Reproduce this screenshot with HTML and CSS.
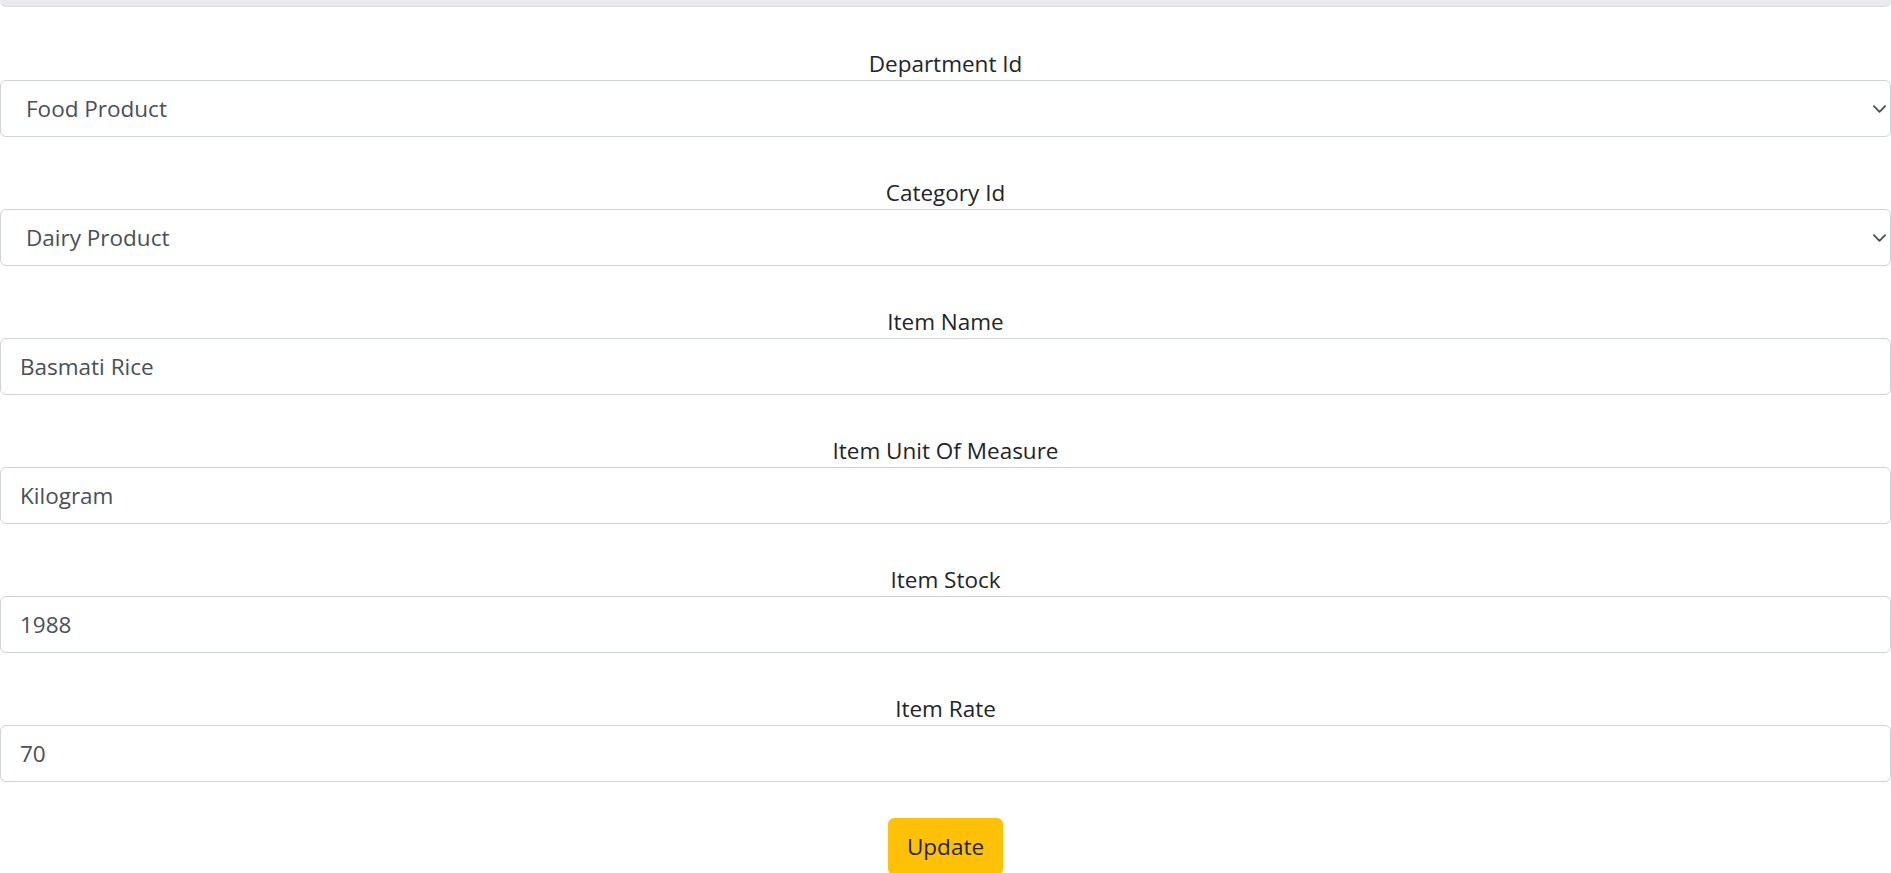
FILE: index.html
```html
<!DOCTYPE html>
<html lang="en">
<head>
<meta charset="utf-8">
<title>Edit Item</title>
<link rel="stylesheet" href="styles.css">
</head>
<body>
<div class="topbar"></div>
<form class="item-form">
  <div class="field">
    <label class="field-label" for="dept">Department Id</label>
    <select class="control select" id="dept"><option>Food Product</option></select>
  </div>
  <div class="field">
    <label class="field-label" for="cat">Category Id</label>
    <select class="control select" id="cat"><option>Dairy Product</option></select>
  </div>
  <div class="field">
    <label class="field-label" for="name">Item Name</label>
    <input class="control" id="name" type="text" value="Basmati Rice">
  </div>
  <div class="field">
    <label class="field-label" for="uom">Item Unit Of Measure</label>
    <input class="control" id="uom" type="text" value="Kilogram">
  </div>
  <div class="field">
    <label class="field-label" for="stock">Item Stock</label>
    <input class="control" id="stock" type="text" value="1988">
  </div>
  <div class="field">
    <label class="field-label" for="rate">Item Rate</label>
    <input class="control" id="rate" type="text" value="70">
  </div>
  <div class="actions">
    <button class="btn-update" type="button">Update</button>
  </div>
</form>
</body>
</html>
```
FILE: styles.css
```css
html, body {
  margin: 0;
  padding: 0;
  background: #fff;
}
body {
  font-family: "Open Sans", "Noto Sans", "Liberation Sans", sans-serif;
  font-size: 22.5px;
  color: #212529;
  overflow: hidden;
}
.topbar {
  height: 6px;
  background: #e9ecef;
  border-bottom: 1px solid #d6dadf;
  border-radius: 0 0 6px 6px;
}
.item-form {
  padding-top: 37px;
}
.field {
  margin-bottom: 36px;
  text-align: center;
}
.field-label {
  display: block;
  padding-top: 3px;
  line-height: 33px;
  font-size: 22.5px;
  color: #212529;
}
.control {
  display: block;
  box-sizing: border-box;
  width: 100%;
  height: 57px;
  margin: 0;
  padding: 0 19px;
  border: 1px solid #cfd3d8;
  border-radius: 6px;
  background-color: #fff;
  font-family: inherit;
  font-size: 22.5px;
  color: #495057;
  text-align: left;
  outline: none;
}
.select {
  -webkit-appearance: none;
  appearance: none;
  padding-left: 25px;
  background-image: url("data:image/svg+xml,%3csvg xmlns='http://www.w3.org/2000/svg' viewBox='0 0 14 8'%3e%3cpath fill='none' stroke='%23495057' stroke-width='2' stroke-linecap='round' stroke-linejoin='round' d='M1 1l6 6 6-6'/%3e%3c/svg%3e");
  background-repeat: no-repeat;
  background-position: right 4px center;
  background-size: 13px 8px;
}
.actions {
  text-align: center;
}
.btn-update {
  width: 115px;
  height: 57px;
  border: 0;
  border-radius: 6px;
  background: #ffc107;
  color: #212529;
  font-family: inherit;
  font-size: 22.5px;
  padding: 0;
}
```
